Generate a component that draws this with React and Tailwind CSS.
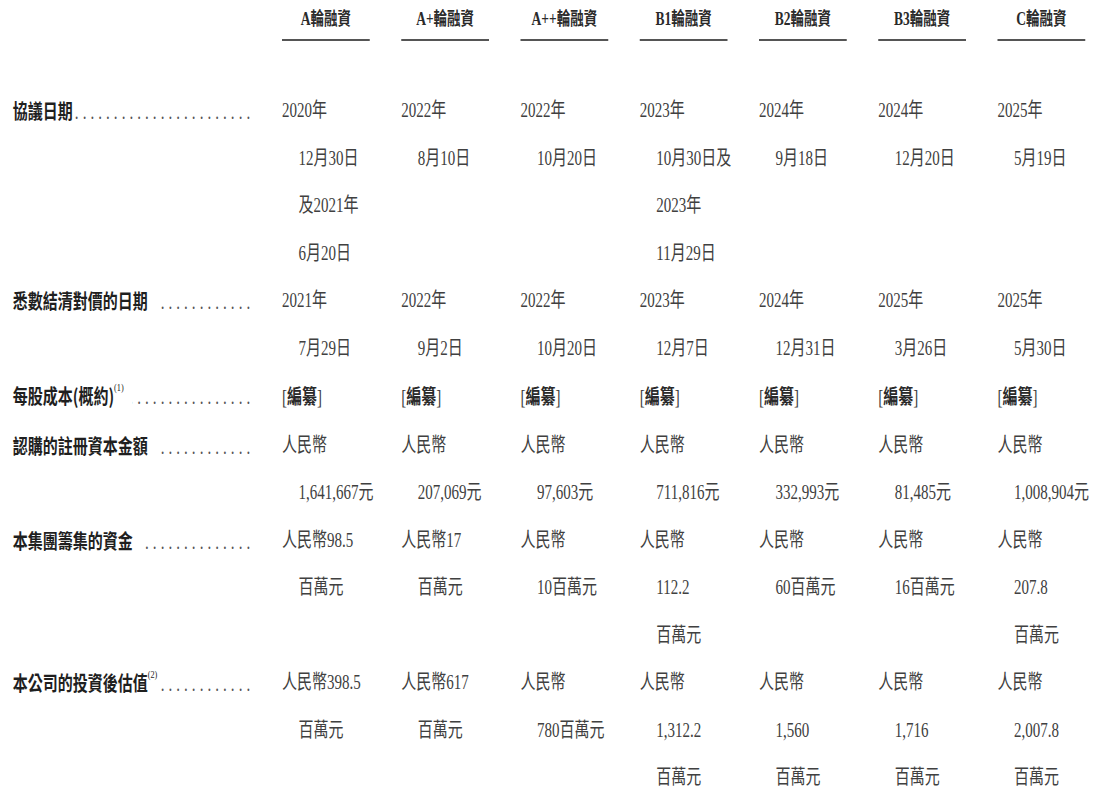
const rounds = ['A輪融資', 'A+輪融資', 'A++輪融資', 'B1輪融資', 'B2輪融資', 'B3輪融資', 'C輪融資'];

const BRACKET = 'BRACKET';

const rows = [
  {
    label: '協議日期',
    cells: [
      ['2020年', '12月30日', '及2021年', '6月20日'],
      ['2022年', '8月10日'],
      ['2022年', '10月20日'],
      ['2023年', '10月30日及', '2023年', '11月29日'],
      ['2024年', '9月18日'],
      ['2024年', '12月20日'],
      ['2025年', '5月19日'],
    ],
  },
  {
    label: '悉數結清對價的日期',
    gap: true,
    cells: [
      ['2021年', '7月29日'],
      ['2022年', '9月2日'],
      ['2022年', '10月20日'],
      ['2023年', '12月7日'],
      ['2024年', '12月31日'],
      ['2025年', '3月26日'],
      ['2025年', '5月30日'],
    ],
  },
  {
    label: '每股成本(概約)',
    note: '(1)',
    gap: true,
    cells: Array(7).fill([BRACKET]),
  },
  {
    label: '認購的註冊資本金額',
    gap: true,
    cells: [
      ['人民幣', '1,641,667元'],
      ['人民幣', '207,069元'],
      ['人民幣', '97,603元'],
      ['人民幣', '711,816元'],
      ['人民幣', '332,993元'],
      ['人民幣', '81,485元'],
      ['人民幣', '1,008,904元'],
    ],
  },
  {
    label: '本集團籌集的資金',
    gap: true,
    cells: [
      ['人民幣98.5', '百萬元'],
      ['人民幣17', '百萬元'],
      ['人民幣', '10百萬元'],
      ['人民幣', '112.2', '百萬元'],
      ['人民幣', '60百萬元'],
      ['人民幣', '16百萬元'],
      ['人民幣', '207.8', '百萬元'],
    ],
  },
  {
    label: '本公司的投資後估值',
    note: '(2)',
    cells: [
      ['人民幣398.5', '百萬元'],
      ['人民幣617', '百萬元'],
      ['人民幣', '780百萬元'],
      ['人民幣', '1,312.2', '百萬元'],
      ['人民幣', '1,560', '百萬元'],
      ['人民幣', '1,716', '百萬元'],
      ['人民幣', '2,007.8', '百萬元'],
    ],
  },
];

const serif = 'font-["Liberation_Serif","Noto_Sans_CJK_TC",serif]';
const sans = 'font-["Noto_Sans_CJK_TC","Liberation_Sans",sans-serif]';

// the whole table is set wide and squeezed by scale-x-75 to get the condensed print look
const cols = 'grid grid-cols-[334px_repeat(7,117px)] gap-x-[42px]';

function Line({ text, indent }) {
  if (text === BRACKET) {
    return (
      <div className="whitespace-nowrap">
        [<span className={`${sans} font-bold text-[#2a2a2a]`}>編纂</span>]
      </div>
    );
  }
  return <div className={`whitespace-nowrap ${indent ? 'pl-[22px]' : ''}`}>{text}</div>;
}

function Label({ row }) {
  return (
    <div className="flex items-baseline pl-[17px]">
      <span className={`${sans} font-bold text-[20px] text-[#1f1f1f] whitespace-nowrap`}>
        {row.label}
        {row.note && (
          <sup className={`${serif} font-normal text-[11px] align-super`}>{row.note}</sup>
        )}
      </span>
      <span className={`flex-1 flex justify-end overflow-hidden -mr-[5px] ${row.gap ? 'ml-3' : ''}`}>
        <span className={`${serif} text-[20px] text-[#555] tracking-[5.4px] whitespace-nowrap`}>
          {'.'.repeat(40)}
        </span>
      </span>
    </div>
  );
}

export default function App() {
  return (
    <div className="w-[1106px] h-[803px] overflow-hidden bg-white">
      <div className="w-[1475px] origin-top-left scale-x-75">
        {/* Header */}
        <div className={cols}>
          <div />
          {rounds.map((r) => (
            <div
              key={r}
              className={`${sans} font-bold text-[18px] leading-[24px] pt-[5px] pb-[8px] text-center text-[#2a2a2a] border-b-2 border-[#555]`}
            >
              <span className={serif}>{r.replace('輪融資', '')}</span>輪融資
            </div>
          ))}
        </div>

        {/* Body */}
        <div className="mt-[46px]">
          {rows.map((row) => (
            <div
              key={row.label}
              className={`${cols} leading-[47.5px] ${serif} text-[20px] text-[#404040]`}
            >
              <Label row={row} />
              {row.cells.map((lines, i) => (
                <div key={i}>
                  {lines.map((t, j) => (
                    <Line key={j} text={t} indent={j > 0} />
                  ))}
                </div>
              ))}
            </div>
          ))}
        </div>
      </div>
    </div>
  );
}
